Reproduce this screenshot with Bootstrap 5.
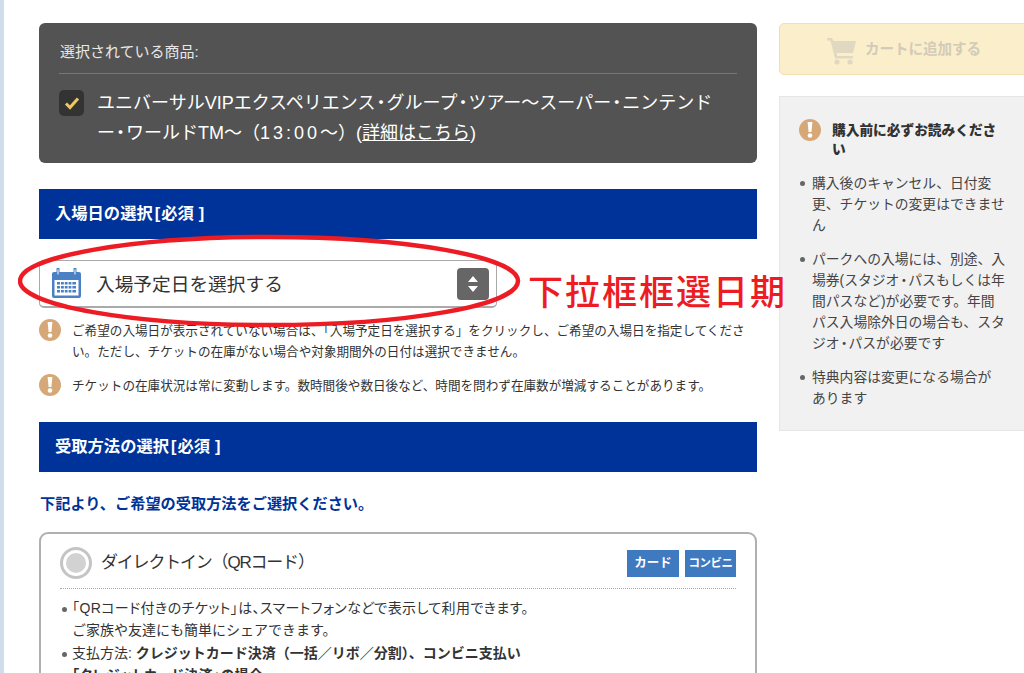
<!DOCTYPE html>
<html lang="ja">
<head>
<meta charset="utf-8">
<title>入場日の選択</title>
<link href="https://cdn.jsdelivr.net/npm/bootstrap@5.3.0/dist/css/bootstrap.min.css" rel="stylesheet">
<style>
html,body{height:673px;overflow:hidden;background:#fff}
body{font-family:"Liberation Sans","Noto Sans CJK JP",sans-serif;color:#333;font-size:14px;position:relative;border-left:4px solid #d0dcec}
.pg{width:1100px;padding:23px 0 0 35px;gap:22px}
.maincol{width:718px;flex:none}
.sidecol{width:262px;flex:none}
.prodbox{background:#535353;color:#fff;height:140px;padding:0 20px;border-radius:6px;margin-bottom:26px}
.prodhead{height:51px;border-bottom:1px solid #777;font-size:15px;line-height:57px;color:#e8e8e8;padding-left:1px}
.prodrow{padding-top:14px;gap:13px}
.chk{width:25px;height:26px;background:#333;border-radius:5px;margin-top:2px;flex:none}
.prodtext{font-size:18px;line-height:30px;flex:1}
.prodtext a{color:#fff}
.nakaguro{font-feature-settings:"palt";padding:0 1px}
.timewide{letter-spacing:3px}
.bluebar{background:#003399;color:#fff;height:50px;line-height:48px;padding-left:16px;font-size:16.3px;font-weight:700}
.brk-open{padding:0 1px 0 2px}
.brk-close{padding-left:5px}
.pick{width:458px;height:48px;margin:21px 0 10px;border:1px solid #aaa;border-bottom-width:2px;border-radius:5px;padding:0 7px 0 11px;background:#fff}
.pick .picklabel{font-size:18.7px;margin-left:14px;color:#333;padding-top:3px}
.spin{width:32px;height:32px;background:#666;border-radius:4px}
.note{gap:11px;font-size:12.6px;line-height:21px;margin-bottom:10px}
.notetext{padding-top:3px}
.warn{flex:none;width:22px;height:22px;border-radius:50%;background:#d6a878;margin-top:1px}
.bluebar.second{margin-top:25px}
.howto{color:#003399;font-weight:700;font-size:15.2px;margin:21px 0 17px 1px;line-height:22px}
.optcard{border:2px solid #b0b0b0;border-bottom:0;border-radius:9px 9px 0 0;padding:13px 19px 0;height:200px}
.opthead{height:42px;border-bottom:1px dotted #aaa}
.radio{width:32px;height:32px;border-radius:50%;border:3px solid #c4c4c4;background:#fff;flex:none;display:flex;align-items:center;justify-content:center;margin-right:9px}
.radio i{display:block;width:20px;height:20px;border-radius:50%;background:#d2d2d2}
.opttitle{font-size:17px;color:#333;flex:1;letter-spacing:-1.2px;padding-top:3px}
.paytag{background:#3f79bf;color:#fff;font-size:12.5px;font-weight:700;width:52px;height:27px;line-height:27px;text-align:center;margin:3px 0 0 6px}
.paytag.tag2{width:51px;font-size:11.5px;letter-spacing:-.5px}
.optlist{list-style:none;margin:8px 0 0;padding:0;font-size:14px;line-height:22.4px}
.optlist li{position:relative;padding-left:12px}
.optlist li::before,.infolist li::before{content:"";position:absolute;left:2px;top:10px;width:5px;height:5px;border-radius:50%;background:#666}
.proportional{font-feature-settings:"palt";letter-spacing:.4px}
.cartbtn{height:52px;width:262px;background:#fbeecb;border:1px solid #f2deb0;border-radius:5px;color:#d2cbb8;font-size:14.5px;font-weight:700;gap:9px;padding:2px 0 0 47px;margin-bottom:21px}
.infobox{background:#f1f1f1;border:1px solid #e6e6e6;height:335px;padding:21px 20px 0}
.infohead{gap:11px;font-size:13.7px;font-weight:700;line-height:19px;width:204px;margin:0 0 14px -1px}
.infohead b{padding-top:3px}
.infolist{list-style:none;margin:0;padding:0;font-size:13.8px;line-height:21px;width:206px;color:#444}
.infolist li{position:relative;padding-left:12px;margin-bottom:13px}
.infolist li::before{top:8px;left:0}
.circle-mark{position:absolute;left:14px;top:234px;width:506px;height:94px;pointer-events:none}
.redtext{position:absolute;left:524px;top:266px;font-family:"Noto Sans CJK TC",sans-serif;font-size:35px;letter-spacing:2px;line-height:48px;font-weight:500;color:#ed1c24;white-space:nowrap}
</style>
</head>
<body>
<div class="pg d-flex">
  <main class="maincol">
    <section class="prodbox">
      <div class="prodhead">選択されている商品:</div>
      <div class="prodrow d-flex align-items-start">
        <div class="chk d-flex align-items-center justify-content-center">
          <svg width="16" height="14" viewBox="0 0 16 14"><path d="M2 7.5l4 4 8-9" fill="none" stroke="#f0c860" stroke-width="3"/></svg>
        </div>
        <div class="prodtext">ユニバーサルVIPエクスペリエンス<span class="nakaguro">・</span>グループ<span class="nakaguro">・</span>ツアー～スーパー<span class="nakaguro">・</span>ニンテンドー<span class="nakaguro">・</span>ワールドTM～（<span class="timewide">13:00</span>～）(<a href="#">詳細はこちら</a>)</div>
      </div>
    </section>
    <div class="bluebar">入場日の選択<span class="brk-open">[</span>必須<span class="brk-close">]</span></div>
    <div class="pick d-flex align-items-center">
      <svg width="31" height="31" viewBox="0 0 31 31" class="flex-none">
        <rect x="1" y="4" width="29" height="26" rx="2" fill="#4a80c4"/>
        <rect x="3.5" y="12" width="24" height="15.5" fill="#fff"/>
        <path d="M7 1v6M24 1v6" stroke="#4a80c4" stroke-width="3" stroke-linecap="round"/>
        <path d="M7 1.5v5M24 1.5v5" stroke="#fff" stroke-width="1"/>
        <g fill="#4a80c4"><rect x="6" y="14" width="19" height="2.5"/><rect x="6" y="18" width="19" height="2.5"/><rect x="6" y="22" width="19" height="2.5"/></g>
        <path d="M9.5 14v11M13.3 14v11M17.1 14v11M20.9 14v11" stroke="#fff" stroke-width="1"/>
      </svg>
      <span class="picklabel flex-grow-1">入場予定日を選択する</span>
      <div class="spin d-flex align-items-center justify-content-center">
        <svg width="12" height="16" viewBox="0 0 12 16"><path d="M6 0l5 6H1zM6 16l5-6H1z" fill="#fff"/></svg>
      </div>
    </div>
    <div class="note d-flex">
      <div class="warn d-flex align-items-center justify-content-center"><svg width="6" height="16" viewBox="0 0 6 16"><path d="M.6 0h4.8L4.4 10H1.6z" fill="#fff"/><circle cx="3" cy="13.5" r="2.3" fill="#fff"/></svg></div>
      <div class="notetext">ご希望の入場日が表示されていない場合は、「入場予定日を選択する」をクリックし、ご希望の入場日を指定してください。ただし、チケットの在庫がない場合や対象期間外の日付は選択できません。</div>
    </div>
    <div class="note d-flex">
      <div class="warn d-flex align-items-center justify-content-center"><svg width="6" height="16" viewBox="0 0 6 16"><path d="M.6 0h4.8L4.4 10H1.6z" fill="#fff"/><circle cx="3" cy="13.5" r="2.3" fill="#fff"/></svg></div>
      <div class="notetext">チケットの在庫状況は常に変動します。数時間後や数日後など、時間を問わず在庫数が増減することがあります。</div>
    </div>
    <div class="bluebar second">受取方法の選択<span class="brk-open">[</span>必須<span class="brk-close">]</span></div>
    <p class="howto">下記より、ご希望の受取方法をご選択ください。</p>
    <section class="optcard">
      <div class="opthead d-flex align-items-start">
        <div class="radio"><i></i></div>
        <div class="opttitle">ダイレクトイン（QRコード）</div>
        <div class="paytag">カード</div>
        <div class="paytag tag2">コンビニ</div>
      </div>
      <ul class="optlist">
        <li><span class="proportional">「QRコード付きのチケット」は、スマートフォンなどで表示して利用できます。</span><br>ご家族や友達にも簡単にシェアできます。</li>
        <li>支払方法: <b>クレジットカード決済（一括／リボ／分割）、コンビニ支払い</b><br><b class="proportional">「クレジットカード決済」の場合</b></li>
      </ul>
    </section>
  </main>
  <aside class="sidecol">
    <div class="cartbtn d-flex align-items-center">
      <svg width="29" height="29" viewBox="0 0 29 29" class="flex-none"><path d="M0 2h5l1.5 3H29l-3 12H9.5l.8 3H26v2.5H8L3.5 4.5H0z" fill="#e0d8c0"/><circle cx="10" cy="26" r="2.6" fill="#e0d8c0"/><circle cx="23" cy="26" r="2.6" fill="#e0d8c0"/></svg>
      <span>カートに追加する</span>
    </div>
    <section class="infobox">
      <div class="infohead d-flex align-items-start">
        <div class="warn d-flex align-items-center justify-content-center"><svg width="6" height="16" viewBox="0 0 6 16"><path d="M.6 0h4.8L4.4 10H1.6z" fill="#fff"/><circle cx="3" cy="13.5" r="2.3" fill="#fff"/></svg></div>
        <b>購入前に必ずお読みください</b>
      </div>
      <ul class="infolist">
        <li>購入後のキャンセル、日付変更、チケットの変更はできません</li>
        <li>パークへの入場には、別途、入場券(スタジオ<span class="nakaguro">・</span>パスもしくは年間パスなど)が必要です。年間パス入場除外日の場合も、スタジオ<span class="nakaguro">・</span>パスが必要です</li>
        <li>特典内容は変更になる場合が<br>あります</li>
      </ul>
    </section>
  </aside>
</div>
<svg class="circle-mark" viewBox="0 0 506 94"><ellipse cx="251" cy="47" rx="249" ry="44" fill="none" stroke="#ed1c24" stroke-width="4.5"/></svg>
<div class="redtext">下拉框框選日期</div>
<script src="https://cdn.jsdelivr.net/npm/bootstrap@5.3.0/dist/js/bootstrap.bundle.min.js"></script>
</body>
</html>
